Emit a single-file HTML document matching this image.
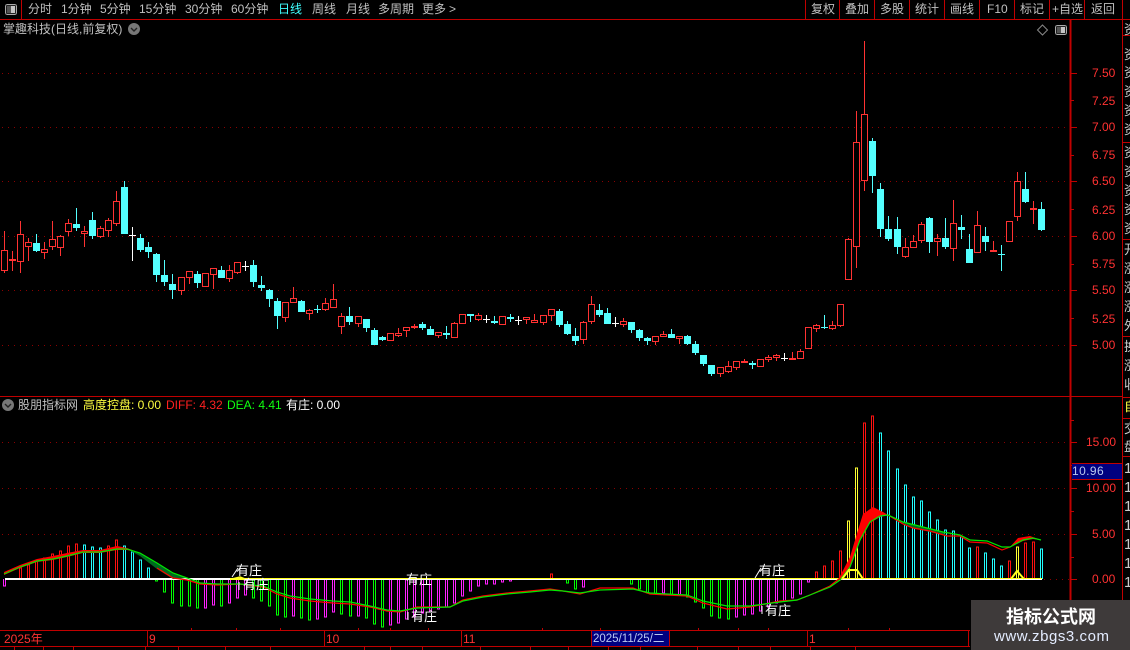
<!DOCTYPE html>
<html><head><meta charset="utf-8">
<style>
html,body{margin:0;padding:0;background:#000;width:1130px;height:650px;overflow:hidden}
#r{position:relative;width:1130px;height:650px;overflow:hidden;background:#000;font:12px/14px "Liberation Sans","WenQuanYi Zen Hei","Noto Sans CJK SC",sans-serif;color:#c0c0c0}
#r span{position:absolute;white-space:nowrap}
.a{color:#ff3232}
.w{color:#fff;font-size:13px}
svg{position:absolute;left:0;top:0}
</style></head><body><div id="r">
<svg width="1130" height="650" shape-rendering="crispEdges">
<!-- grid -->
<path d="M2 73.5H1069M2 127.5H1069M2 181.5H1069M2 236.5H1069M2 290.5H1069M2 345.5H1069M2 442.5H1069M2 488.5H1069M2 534.5H1069M1044 579.5H1069" stroke="#8c0000" stroke-dasharray="1 5" fill="none"/>
<!-- frame -->
<path d="M0 19.5H1130M21.5 0V19M805.5 0V19M839.5 0V19M874.5 0V19M909.5 0V19M944.5 0V19M979.5 0V19M1014.5 0V19M1049.5 0V19M1084.5 0V19M1122.5 0V650M0 396.5H1122M0 630.5H970M0 646.5H970M1122 35.5H1130M1122 142.5H1130M1122 239.5H1130M1122 336.5H1130M1122 397.5H1130M1122 418.5H1130M1122 456.5H1130M1072 463.5H1122M1072 479.5H1122M147.5 630V646M324.5 630V646M461.5 630V646M591.5 630V646M669.5 630V646M807.5 630V646M968.5 630V646M14.5 646V650M43.5 646V650M73.5 646V650M145.5 646V650M178.5 646V650M225.5 646V650M270.5 646V650M364.5 646V650M390.5 646V650M422.5 646V650M480.5 646V650M530.5 646V650M568.5 646V650M608.5 646V650M640.5 646V650M697.5 646V650M738.5 646V650M770.5 646V650M810.5 646V650M855.5 646V650M191.5 628V630M236.5 628V630M280.5 628V630M358.5 628V630M390.5 628V630M428.5 628V630M542.5 628V630M600.5 628V630M698.5 628V630M738.5 628V630M768.5 628V630M848.5 628V630M889.5 628V630" stroke="#c00000" fill="none"/>
<path d="M1070.5 19V650" stroke="#c00000" stroke-width="2" fill="none"/>
<path d="M1071 73.5H1077M1071 100.5H1074M1071 127.5H1077M1071 155.5H1074M1071 181.5H1077M1071 209.5H1074M1071 236.5H1077M1071 264.5H1074M1071 290.5H1077M1071 318.5H1074M1071 345.5H1077M1071 442.5H1077M1071 465.5H1074M1071 488.5H1077M1071 511.5H1074M1071 534.5H1077M1071 557.5H1074M1071 579.5H1077M1071 420.5H1074" stroke="#c00000" fill="none"/>
<rect x="592" y="631" width="77" height="15" fill="#000080"/>
<rect x="1072" y="464" width="50" height="15" fill="#000080"/>
<!-- top-left icon & small icons -->
<rect x="5.5" y="4.5" width="11" height="10" rx="2" fill="#222" stroke="#aaa"/><rect x="7" y="6" width="4" height="7" fill="#555"/><rect x="11" y="6" width="4" height="7" fill="#c4c4c4"/>
<rect x="1055.5" y="25.5" width="11" height="9" rx="2" fill="#222" stroke="#aaa"/><rect x="1057" y="27" width="4" height="6" fill="#555"/><rect x="1061" y="27" width="4" height="6" fill="#c4c4c4"/>
<path d="M1042.5 25L1047.5 30L1042.5 35L1037.5 30Z" fill="none" stroke="#888" shape-rendering="auto"/>
<circle cx="134" cy="29" r="6" fill="#777" shape-rendering="auto"/><path d="M131 28L134 31L137 28" stroke="#222" stroke-width="1.4" fill="none" shape-rendering="auto"/>
<circle cx="8" cy="405" r="6" fill="#777" shape-rendering="auto"/><path d="M5 404L8 407L11 404" stroke="#222" stroke-width="1.4" fill="none" shape-rendering="auto"/>

<!-- red wicks -->
<path stroke="#ff3232" fill="none" d="M4.5 231V273M12.5 251V271M20.5 221V273M28.5 238V261M44.5 242V259M52.5 221V250M60.5 235V256M68.5 219V236M84.5 226V247M100.5 226V238M108.5 218V237M116.5 191V226M181.5 277V295M189.5 271V284M205.5 273V287M213.5 268V289M229.5 265V282M237.5 262V274M285.5 302V322M293.5 287V303M309.5 309V320M325.5 298V311M333.5 284V308M341.5 313V334M358.5 316V327M390.5 333V341M398.5 328V337M406.5 327V337M414.5 324V329M438.5 332V338M454.5 322V338M462.5 314V324M478.5 313V321M502.5 316V325M526.5 317V324M534.5 314V323M543.5 315V325M551.5 309V321M583.5 321V344M591.5 296V324M623.5 318V327M655.5 336V345M663.5 331V337M679.5 336V344M720.5 367V377M728.5 361V373M736.5 361V370M744.5 359V363M760.5 359V367M768.5 355V362M776.5 354V361M792.5 352V360M800.5 349V359M808.5 327V349M816.5 324V332M832.5 321V330M840.5 304V327M848.5 238V280M856.5 111V268M864.5 41V191M905.5 238V258M913.5 235V248M921.5 222V243M937.5 234V256M953.5 200V261M977.5 211V253M993.5 241V252M1009.5 221V242M1017.5 172V221M1033.5 201V224"/>
<!-- red hollow bodies -->
<path stroke="#ff3232" fill="#000" d="M1.5 250.5h6v20h-6zM9.5 259.5h6v1h-6zM17.5 234.5h6v27h-6zM25.5 242.5h6v4h-6zM41.5 249.5h6v3h-6zM49.5 239.5h6v7h-6zM57.5 236.5h6v11h-6zM65.5 223.5h6v8h-6zM81.5 231.5h6v2h-6zM97.5 228.5h6v8h-6zM105.5 220.5h6v10h-6zM113.5 201.5h6v22h-6zM178.5 277.5h6v13h-6zM186.5 271.5h6v6h-6zM202.5 273.5h6v13h-6zM210.5 268.5h6v6h-6zM226.5 270.5h6v8h-6zM234.5 262.5h6v10h-6zM282.5 302.5h6v15h-6zM290.5 298.5h6v4h-6zM306.5 310.5h6v3h-6zM322.5 303.5h6v6h-6zM330.5 299.5h6v8h-6zM338.5 316.5h6v10h-6zM355.5 316.5h6v7h-6zM387.5 333.5h6v7h-6zM395.5 333.5h6v2h-6zM403.5 327.5h6v3h-6zM435.5 332.5h6v3h-6zM451.5 323.5h6v14h-6zM459.5 314.5h6v9h-6zM475.5 315.5h6v4h-6zM499.5 316.5h6v8h-6zM523.5 317.5h6v2h-6zM531.5 320.5h6v2h-6zM540.5 315.5h6v7h-6zM548.5 309.5h6v6h-6zM580.5 322.5h6v17h-6zM588.5 304.5h6v17h-6zM620.5 321.5h6v3h-6zM652.5 336.5h6v5h-6zM660.5 334.5h6v2h-6zM676.5 336.5h6v2h-6zM717.5 367.5h6v6h-6zM725.5 366.5h6v5h-6zM733.5 361.5h6v6h-6zM757.5 359.5h6v7h-6zM765.5 357.5h6v2h-6zM773.5 355.5h6v2h-6zM797.5 351.5h6v7h-6zM805.5 327.5h6v21h-6zM813.5 325.5h6v3h-6zM829.5 325.5h6v3h-6zM837.5 304.5h6v21h-6zM845.5 239.5h6v40h-6zM853.5 142.5h6v104h-6zM861.5 114.5h6v66h-6zM902.5 247.5h6v9h-6zM910.5 241.5h6v6h-6zM918.5 224.5h6v16h-6zM934.5 238.5h6v3h-6zM950.5 223.5h6v25h-6zM974.5 225.5h6v27h-6zM1006.5 221.5h6v20h-6zM1014.5 181.5h6v35h-6z"/>
<!-- red filled -->
<path fill="#ff3232" d="M411 326h7v2h-7zM741 361h7v2h-7zM789 358h7v2h-7zM990 250h7v2h-7zM1030 208h7v2h-7z"/>
<!-- cyan wicks -->
<path stroke="#54ffff" fill="none" d="M36.5 234V252M76.5 208V231M92.5 212V239M124.5 181V234M140.5 234V252M148.5 242V258M156.5 253V282M164.5 260V286M172.5 274V299M197.5 271V288M221.5 266V278M253.5 260V287M261.5 276V291M269.5 289V307M277.5 298V329M301.5 300V312M317.5 305V313M349.5 307V325M366.5 319V332M374.5 328V345M382.5 336V341M422.5 322V330M430.5 326V335M446.5 326V339M470.5 314V322M494.5 316V324M510.5 314V322M559.5 309V327M567.5 321V335M575.5 328V345M599.5 304V317M607.5 308V324M631.5 322V333M639.5 329V341M647.5 337V345M671.5 329V338M687.5 335V345M695.5 341V355M703.5 355V366M711.5 365V376M752.5 361V369M824.5 315V329M872.5 138V193M880.5 183V237M888.5 216V241M897.5 217V254M929.5 217V253M945.5 218V249M961.5 215V239M969.5 234V263M985.5 227V251M1001.5 245V271M1025.5 172V203M1041.5 202V231M314 309.5h7M821 327.5h7M998 254.5h7"/>
<!-- cyan bodies -->
<path fill="#54ffff" d="M33 243h7v8h-7zM73 224h7v4h-7zM89 220h7v16h-7zM121 187h7v47h-7zM137 238h7v12h-7zM145 247h7v5h-7zM153 254h7v21h-7zM161 275h7v7h-7zM169 284h7v6h-7zM194 274h7v9h-7zM218 270h7v8h-7zM250 265h7v17h-7zM258 285h7v3h-7zM266 290h7v9h-7zM274 301h7v15h-7zM298 301h7v11h-7zM346 316h7v6h-7zM363 319h7v9h-7zM371 330h7v15h-7zM379 337h7v3h-7zM419 324h7v4h-7zM427 329h7v6h-7zM443 333h7v2h-7zM467 314h7v2h-7zM491 321h7v2h-7zM507 317h7v2h-7zM556 311h7v14h-7zM564 324h7v10h-7zM572 336h7v5h-7zM596 310h7v5h-7zM604 313h7v11h-7zM628 322h7v8h-7zM636 330h7v8h-7zM644 338h7v3h-7zM668 334h7v4h-7zM684 336h7v8h-7zM692 344h7v9h-7zM700 355h7v9h-7zM708 365h7v9h-7zM749 363h7v2h-7zM869 141h7v35h-7zM877 189h7v40h-7zM885 229h7v10h-7zM894 229h7v18h-7zM926 218h7v24h-7zM942 238h7v9h-7zM958 227h7v3h-7zM966 249h7v14h-7zM982 236h7v6h-7zM1022 189h7v13h-7zM1038 209h7v21h-7z"/>
<!-- white crosses -->
<path stroke="#fff" fill="none" d="M132.5 227V261M129 235.5h7M245.5 261V271M242 266.5h7M486.5 315V323M483 319.5h7M518.5 316V325M515 320.5h7M615.5 317V327M612 323.5h7M784.5 353V361M781 358.5h7"/>

<!-- histogram red -->
<path stroke="#ff1010" fill="none" d="M19.5 579V568h2V579M27.5 579V565h2V579M35.5 579V561h2V579M43.5 579V558h2V579M51.5 579V554h2V579M59.5 579V551h2V579M67.5 579V546h2V579M75.5 579V544h2V579M107.5 579V546h2V579M115.5 579V540h2V579M550.5 579V574h2V579M815.5 579V572h2V579M823.5 579V566h2V579M831.5 579V561h2V579M839.5 579V551h2V579M863.5 579V423h2V579M871.5 579V416h2V579M976.5 579V547h2V579M1008.5 579V561h2V579M1024.5 579V543h2V579M1032.5 579V542h2V579"/>
<!-- histogram cyan -->
<path stroke="#22ffff" fill="none" d="M83.5 579V545h2V579M91.5 579V547h2V579M99.5 579V548h2V579M123.5 579V546h2V579M131.5 579V552h2V579M139.5 579V560h2V579M147.5 579V568h2V579M879.5 579V433h2V579M887.5 579V451h2V579M896.5 579V469h2V579M904.5 579V485h2V579M912.5 579V497h2V579M920.5 579V501h2V579M928.5 579V512h2V579M936.5 579V520h2V579M944.5 579V530h2V579M952.5 579V531h2V579M960.5 579V537h2V579M968.5 579V548h2V579M984.5 579V553h2V579M992.5 579V559h2V579M1000.5 579V566h2V579M1040.5 579V549h2V579"/>
<!-- histogram yellow -->
<path stroke="#ffff30" fill="none" d="M847.5 579V521h2V579M855.5 579V468h2V579M1016.5 579V547h2V579"/>
<!-- histogram green -->
<path stroke="#00ff00" fill="none" d="M155.5 579V581h2V579M163.5 579V592h2V579M171.5 579V603h2V579M180.5 579V606h2V579M188.5 579V606h2V579M196.5 579V608h2V579M220.5 579V606h2V579M252.5 579V598h2V579M260.5 579V601h2V579M268.5 579V606h2V579M276.5 579V615h2V579M284.5 579V617h2V579M300.5 579V618h2V579M308.5 579V620h2V579M340.5 579V614h2V579M349.5 579V616h2V579M365.5 579V618h2V579M373.5 579V624h2V579M381.5 579V627h2V579M566.5 579V583h2V579M574.5 579V589h2V579M630.5 579V584h2V579M638.5 579V589h2V579M646.5 579V593h2V579M654.5 579V594h2V579M670.5 579V595h2V579M686.5 579V597h2V579M694.5 579V602h2V579M702.5 579V608h2V579M710.5 579V616h2V579M718.5 579V618h2V579M727.5 579V619h2V579"/>
<!-- histogram magenta -->
<path stroke="#ff20ff" fill="none" d="M3.5 579V586h2V579M204.5 579V608h2V579M212.5 579V605h2V579M228.5 579V603h2V579M236.5 579V598h2V579M244.5 579V595h2V579M292.5 579V616h2V579M316.5 579V619h2V579M324.5 579V617h2V579M332.5 579V612h2V579M357.5 579V616h2V579M389.5 579V625h2V579M397.5 579V623h2V579M405.5 579V619h2V579M413.5 579V617h2V579M421.5 579V613h2V579M429.5 579V612h2V579M437.5 579V609h2V579M445.5 579V607h2V579M453.5 579V603h2V579M461.5 579V596h2V579M469.5 579V591h2V579M477.5 579V586h2V579M485.5 579V584h2V579M493.5 579V584h2V579M501.5 579V582h2V579M509.5 579V581h2V579M582.5 579V587h2V579M662.5 579V593h2V579M678.5 579V595h2V579M735.5 579V617h2V579M743.5 579V615h2V579M751.5 579V614h2V579M759.5 579V611h2V579M767.5 579V607h2V579M775.5 579V603h2V579M783.5 579V601h2V579M791.5 579V598h2V579M799.5 579V594h2V579M807.5 579V582h2V579"/>

<!-- baseline -->
<rect x="5" y="578" width="1037" height="2" fill="#ffff20"/>
<rect x="5" y="579" width="1037" height="1" fill="#fff"/>
<rect x="5" y="578" width="225" height="2" fill="#fff"/>
<rect x="230" y="578" width="14" height="2" fill="#ffff20"/>

<g shape-rendering="auto" fill="none">
<!-- ribbons -->
<path fill="#ff0000" d="M4 572L20 565L37 559L53 556L67 553L83 550L100 550L117 546L127 548L140 553L127 550L117 550L100 553L83 553L67 557L53 560L37 562L20 568L4 575Z"/>
<path fill="#006a20" d="M127 549L140 553L157 563L173 573L187 578L173 579L157 569L140 556Z"/>
<path fill="#ff0000" d="M838 580L850 557L858 530L863 514L873 507L883 512L888 515L880 517L870 523L860 541L850 568L840 581Z"/>
<path fill="#ff0000" d="M1010 547L1018 538L1030 536L1041 540L1033 539L1023 541Z"/>
<path fill="#006a20" d="M888 515L903 522L923 527L943 532L947 536L930 532L913 528L903 524Z"/>
<!-- DIFF -->
<path stroke="#ff0000" stroke-width="1.2" d="M157 568L173 578L187 580L200 584L217 585L240 584L263 587L277 594L290 598L310 601L333 603L350 604L370 607L387 611L400 612L417 607L450 607L463 600L483 596L507 593L530 591L550 589L563 591L580 594L600 588L633 588L650 594L667 595L687 596L703 603L727 609L750 607L780 601L797 600L810 595L830 586L840 578"/>
<path stroke="#ff0000" stroke-width="1.2" d="M888 515L903 524L913 528L930 531L947 536L960 536L970 542L987 543L1002 550L1010 547"/>
<!-- DEA -->
<path stroke="#00e800" stroke-width="1.2" d="M4 574L20 567L37 561L53 559L67 556L83 552L100 552L117 549L127 549L140 553L157 563L173 573L187 578L200 583L217 584L240 584L263 586L277 592L290 596L310 599L333 601L350 602L370 606L387 610L400 611L417 608L450 607L463 601L483 597L507 594L530 592L550 590L563 591L580 593L600 590L633 589L650 593L667 594L687 595L703 601L727 606L750 606L780 602L797 600L810 595L830 587L840 580L850 567L860 540L870 522L880 516L888 515L903 522L923 527L943 532L960 535L970 540L987 541L1002 547L1010 547L1023 540L1033 538L1041 540"/>
<!-- yellow bumps -->
<path stroke="#ffff20" stroke-width="2" d="M842 579L849 570L857 570L863 579M1011 579L1017 571L1024 579"/>
<path stroke="#ffff20" stroke-width="1.5" d="M232 579L240 577L245 579"/>
<!-- leaders -->
<path stroke="#fff" d="M232 577L238 568M239 582V590M755 578L761 568M408 612V620M762 606V614"/>
</g>
</svg>

<!-- toolbar -->
<span style="left:28px;top:2px">分时</span>
<span style="left:61px;top:2px">1分钟</span>
<span style="left:100px;top:2px">5分钟</span>
<span style="left:139px;top:2px">15分钟</span>
<span style="left:185px;top:2px">30分钟</span>
<span style="left:231px;top:2px">60分钟</span>
<span style="left:278px;top:2px;color:#40ffff">日线</span>
<span style="left:312px;top:2px">周线</span>
<span style="left:346px;top:2px">月线</span>
<span style="left:378px;top:2px">多周期</span>
<span style="left:422px;top:2px">更多</span>
<span style="left:449px;top:2px">&gt;</span>
<span style="left:811px;top:2px">复权</span>
<span style="left:845px;top:2px">叠加</span>
<span style="left:880px;top:2px">多股</span>
<span style="left:915px;top:2px">统计</span>
<span style="left:950px;top:2px">画线</span>
<span style="left:987px;top:2px">F10</span>
<span style="left:1020px;top:2px">标记</span>
<span style="left:1052px;top:2px">+自选</span>
<span style="left:1091px;top:2px">返回</span>
<span style="left:3px;top:22px">掌趣科技(日线,前复权)</span>
<!-- price axis -->
<span class="a" style="left:1092px;top:66px">7.50</span>
<span class="a" style="left:1092px;top:94px">7.25</span>
<span class="a" style="left:1092px;top:120px">7.00</span>
<span class="a" style="left:1092px;top:148px">6.75</span>
<span class="a" style="left:1092px;top:174px">6.50</span>
<span class="a" style="left:1092px;top:203px">6.25</span>
<span class="a" style="left:1092px;top:229px">6.00</span>
<span class="a" style="left:1092px;top:257px">5.75</span>
<span class="a" style="left:1092px;top:283px">5.50</span>
<span class="a" style="left:1092px;top:312px">5.25</span>
<span class="a" style="left:1092px;top:338px">5.00</span>
<span class="a" style="left:1086px;top:435px">15.00</span>
<span class="a" style="left:1086px;top:481px">10.00</span>
<span class="a" style="left:1092px;top:527px">5.00</span>
<span class="a" style="left:1092px;top:572px">0.00</span>
<span style="left:1072px;top:464px;color:#b8c8f0;letter-spacing:.4px">10.96</span>
<!-- indicator header -->
<span style="left:18px;top:398px">股朋指标网</span>
<span style="left:83px;top:398px;color:#ffff40">高度控盘: 0.00</span>
<span style="left:166px;top:398px;color:#ff2020">DIFF: 4.32</span>
<span style="left:227px;top:398px;color:#10ff10">DEA: 4.41</span>
<span style="left:286px;top:398px;color:#fff">有庄: 0.00</span>
<!-- signals -->
<span class="w" style="left:236px;top:564px">有庄</span>
<span class="w" style="left:243px;top:578px">有庄</span>
<span class="w" style="left:406px;top:573px">有庄</span>
<span class="w" style="left:411px;top:610px">有庄</span>
<span class="w" style="left:759px;top:564px">有庄</span>
<span class="w" style="left:765px;top:604px">有庄</span>
<!-- date axis -->
<span class="a" style="left:4px;top:632px">2025年</span>
<span class="a" style="left:149px;top:632px">9</span>
<span class="a" style="left:326px;top:632px">10</span>
<span class="a" style="left:463px;top:632px">11</span>
<span class="a" style="left:809px;top:632px">1</span>
<span style="left:593px;top:632px;color:#b8c8f0;font-size:11.5px">2025/11/25/二</span>
<!-- right clipped column -->
<div style="position:absolute;left:1124px;top:0;width:6px;height:650px;overflow:hidden;color:#ccc;font-size:13px;line-height:13px">
<span style="left:0;top:23px">资</span>
<span style="left:0;top:48px">资</span><span style="left:0;top:66px">资</span><span style="left:0;top:85px">资</span><span style="left:0;top:104px">资</span><span style="left:0;top:123px">资</span>
<span style="left:0;top:146px">资</span><span style="left:0;top:165px">资</span><span style="left:0;top:184px">资</span><span style="left:0;top:203px">资</span><span style="left:0;top:222px">资</span>
<span style="left:0;top:243px">开</span><span style="left:0;top:262px">涨</span><span style="left:0;top:281px">涨</span><span style="left:0;top:300px">涨</span><span style="left:0;top:319px">外</span>
<span style="left:0;top:340px">换</span><span style="left:0;top:359px">涨</span><span style="left:0;top:378px">收</span>
<span style="left:0;top:400px;color:#ffff40">自</span>
<span style="left:0;top:422px">交</span><span style="left:0;top:440px">盘</span>
<span style="left:0;top:461px;font-size:15px;line-height:15px">1</span><span style="left:0;top:480px;font-size:15px;line-height:15px">1</span><span style="left:0;top:499px;font-size:15px;line-height:15px">1</span><span style="left:0;top:518px;font-size:15px;line-height:15px">1</span><span style="left:0;top:537px;font-size:15px;line-height:15px">1</span><span style="left:0;top:556px;font-size:15px;line-height:15px">1</span><span style="left:0;top:575px;font-size:15px;line-height:15px">1</span>
</div>
<!-- watermark -->
<div style="position:absolute;left:971px;top:600px;width:159px;height:50px;background:#3e3a3a"></div>
<span style="left:1006px;top:605px;font-size:18px;line-height:22px;font-weight:bold;color:#fff;font-family:'Noto Sans CJK SC','WenQuanYi Zen Hei',sans-serif">指标公式网</span>
<span style="left:994px;top:628px;font-size:15px;line-height:18px;color:#e4ecff;letter-spacing:.55px">www.zbgs3.com</span>
</div></body></html>
